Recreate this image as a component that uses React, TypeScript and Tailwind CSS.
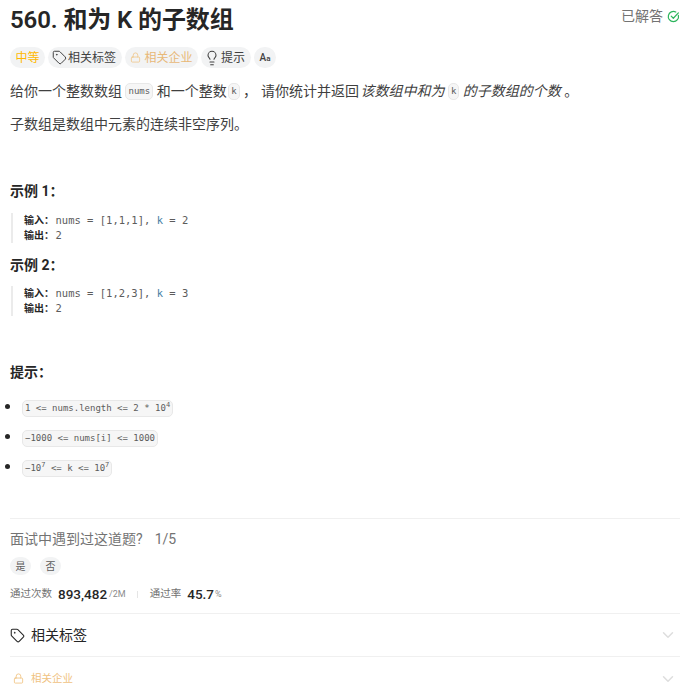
import { ChevronDown, Lightbulb, Lock, Tag } from "lucide-react";
import type { ReactNode } from "react";

const CJK = "font-['Roboto','Noto_Sans_CJK_SC',sans-serif]";
const MONO = "font-['DejaVu_Sans_Mono','Noto_Sans_CJK_SC',monospace]";

function Pill({ children, className = "" }: { children: ReactNode; className?: string }) {
  return (
    <div className={`flex h-[21px] items-center rounded-full bg-[#f2f3f4] text-[12px] ${className}`}>
      {children}
    </div>
  );
}

function Code({ children, className = "" }: { children: ReactNode; className?: string }) {
  return (
    <code className={`${MONO} rounded-[5px] border border-[#e8e8e8] bg-[#f6f6f6] px-[2px] py-px text-[9px] leading-[13px] text-[#5c5c5c] ${className}`}>
      {children}
    </code>
  );
}

function Example({ title, input, k }: { title: string; input: string; k: string }) {
  return (
    <div>
      <h3 className="text-[14px] leading-[20px] font-bold text-[#262626]">{title}</h3>
      <div className="mt-[11.5px] ml-px flex flex-col border-l-2 border-[#ebebeb] pl-[11px] text-[10px] leading-[15px]">
        <div className="text-[#5c5c5c]">
          <strong className="font-bold text-[#262626]">输入：</strong>
          <span className={`${MONO} ml-[1.5px] text-[10.5px]`}>
            nums = [{input}], <span className="text-[#4a7fa5]">k</span> = {k}
          </span>
        </div>
        <div className="text-[#5c5c5c]">
          <strong className="font-bold text-[#262626]">输出：</strong>
          <span className={`${MONO} ml-[1.5px] text-[10.5px]`}>2</span>
        </div>
      </div>
    </div>
  );
}

const CONSTRAINTS: ReactNode[] = [
  <>1 &lt;= nums.length &lt;= 2 * 10<sup className="text-[7px]">4</sup></>,
  <>−1000 &lt;= nums[i] &lt;= 1000</>,
  <>−10<sup className="text-[7px]">7</sup> &lt;= k &lt;= 10<sup className="text-[7px]">7</sup></>,
];

export default function App() {
  return (
    <div className={`${CJK} h-[689px] w-[686px] overflow-hidden bg-white pr-[6px] pl-[10px] text-[#262626]`}>
      <div className="flex items-start justify-between pt-[4px]">
        <h1 className="text-[24px] leading-[33px] font-semibold tracking-[-0.1px] text-[#262626]">560. 和为 K 的子数组</h1>
        <div className="mt-[2px] flex items-center gap-[4px] text-[14px] leading-[20px] text-[#737373]">
          已解答
          <svg viewBox="0 0 16 16" className="h-[13px] w-[13px]" fill="none" stroke="#2db55d" strokeWidth="1.5" strokeLinecap="round" strokeLinejoin="round">
            <path d="M14 6.6A6.3 6.3 0 1 1 10.8 2.5" />
            <path d="M5.2 7.6 7.8 10.2 14 3.6" />
          </svg>
        </div>
      </div>

      <div className="mt-[10px] flex items-center gap-[3px]">
        <Pill className="w-[35px] justify-center text-[#ffb800]">中等</Pill>
        <Pill className="w-[74px] gap-px pl-[4px] text-[#404040]">
          <Tag size={15} strokeWidth={1.6} />
          相关标签
        </Pill>
        <Pill className="w-[73px] justify-center gap-[3px] text-[#e8b877]">
          <Lock size={11} strokeWidth={1.6} className="text-[#f0c27f]" />
          相关企业
        </Pill>
        <Pill className="w-[50px] gap-px pl-[3px] text-[#404040]">
          <Lightbulb size={16} strokeWidth={1.6} />
          提示
        </Pill>
        <Pill className="w-[22px] justify-center text-[#404040]">
          <span className="text-[10px] font-medium">A<span className="text-[8px]">a</span></span>
        </Pill>
      </div>

      <p className="mt-[12px] flex items-center text-[14px] leading-[22px] text-[#404040]">
        给你一个整数数组&nbsp;
        <Code>nums</Code>
        &nbsp;和一个整数&nbsp;
        <Code className="-ml-[2px]">k</Code>
        &nbsp;，<span className="ml-[4px]">请你统计并返回</span>
        <em className="ml-[1.5px] italic">该数组中和为&nbsp;</em>
        <Code>k</Code>
        <em className="italic">&nbsp;的子数组的个数</em>
        &nbsp;。
      </p>
      <p className="mt-[11px] text-[14px] leading-[22px] text-[#404040]">子数组是数组中元素的连续非空序列。</p>

      <div className="mt-[46px]">
        <Example title="示例 1：" input="1,1,1" k="2" />
      </div>
      <div className="mt-[12px]">
        <Example title="示例 2：" input="1,2,3" k="3" />
      </div>

      <h3 className="mt-[46px] text-[14px] leading-[20px] font-bold text-[#262626]">提示：</h3>
      <ul className="mt-[18px] flex flex-col gap-[14px]">
        {CONSTRAINTS.map((item, index) => (
          <li key={index} className="flex h-[16px] items-center">
            <span className="mb-[4px] -ml-[5px] h-[5px] w-[5px] rounded-full bg-[#262626]" />
            <span className="ml-[12px] flex">
              <Code>{item}</Code>
            </span>
          </li>
        ))}
      </ul>

      <div className="mt-[42px] border-t border-[#f0f0f0] pt-[10px]">
        <div className="flex items-center text-[14px] leading-[20px] text-[#737373]">
          面试中遇到过这道题?
          <span className="ml-[12px]">1/5</span>
        </div>
        <div className="mt-[8px] flex gap-[9px]">
          <div className="flex h-[18px] w-[21px] items-center justify-center rounded-full bg-[#f2f3f4] text-[10px] text-[#5c5c5c]">是</div>
          <div className="flex h-[18px] w-[21px] items-center justify-center rounded-full bg-[#f2f3f4] text-[10px] text-[#5c5c5c]">否</div>
        </div>
        <div className="mt-[9px] flex h-[20px] items-center text-[10.5px] text-[#737373]">
          通过次数
          <span className="ml-[6px] text-[13.5px] font-medium text-[#262626]">893,482</span>
          <span className="ml-[2px] pt-px text-[9px] text-[#8c8c8c]">/2M</span>
          <span className="mx-[11.5px] h-[7px] w-px bg-[#e5e5e5]" />
          通过率
          <span className="ml-[6px] text-[13.5px] font-medium text-[#262626]">45.7</span>
          <span className="ml-px pt-px text-[9px] text-[#8c8c8c]">%</span>
        </div>
      </div>

      <div className="mt-[9px] flex h-[43px] items-center justify-between border-t border-[#f0f0f0]">
        <div className="flex items-center gap-[6px] text-[14px] text-[#262626]">
          <Tag size={15} strokeWidth={1.7} />
          相关标签
        </div>
        <ChevronDown size={18} strokeWidth={2} className="mr-[3px] text-[#dedede]" />
      </div>
      <div className="flex h-[44px] items-center justify-between border-t border-[#f0f0f0]">
        <div className="flex items-center gap-[7px] text-[10.5px] text-[#f0c27f]">
          <Lock size={11} strokeWidth={1.8} className="ml-[3px]" />
          相关企业
        </div>
        <ChevronDown size={18} strokeWidth={2} className="mr-[3px] text-[#dedede]" />
      </div>
    </div>
  );
}
